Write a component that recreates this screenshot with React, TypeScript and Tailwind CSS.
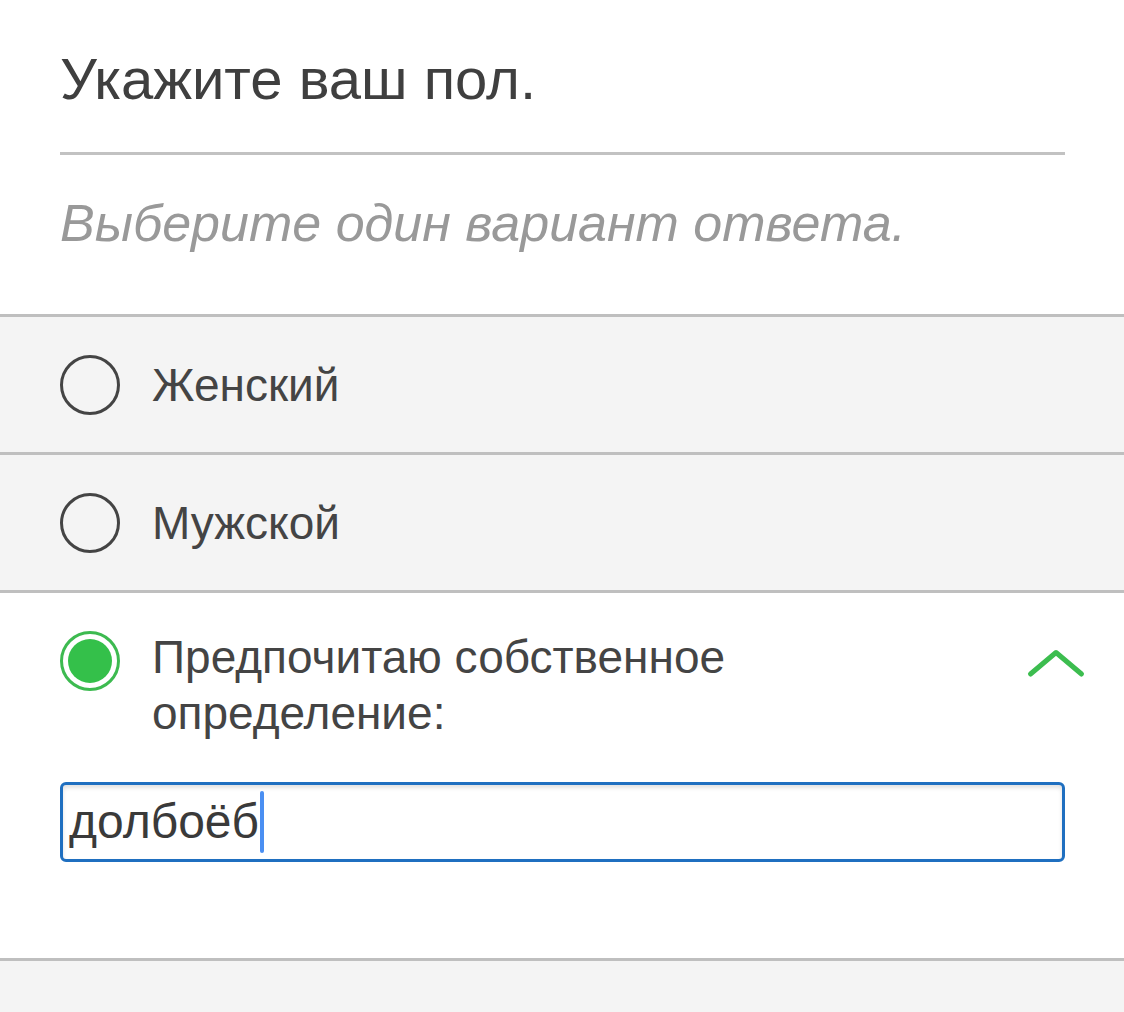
const options = [
  { label: 'Женский' },
  { label: 'Мужской' },
];

function Radio({ checked }: { checked?: boolean }) {
  if (checked) {
    return (
      <div className="w-[60px] h-[60px] shrink-0 rounded-full border-[3px] border-[#3dba50] flex items-center justify-center bg-white">
        <div className="w-[44px] h-[44px] rounded-full bg-[#34c04a]" />
      </div>
    );
  }
  return <div className="w-[60px] h-[60px] shrink-0 rounded-full border-[3px] border-[#444]" />;
}

export default function App() {
  return (
    <div className="w-[1124px] h-[1012px] overflow-hidden bg-white font-['Liberation_Sans',Arial,sans-serif] text-[#444]">
      <div className="pt-[43px] px-[60px]">
        <h1 className="text-[58px] leading-[72px] text-[#3f3f3f]">Укажите ваш пол.</h1>
      </div>
      <div className="ml-[60px] w-[1005px] h-[3px] bg-[#c2c2c2] mt-[37px]" />
      <p className="px-[60px] mt-[34px] pb-[57px] text-[52px] leading-[68px] italic text-[#999]">
        Выберите один вариант ответа.
      </p>

      <div className="border-t-[3px] border-[#bfbfbf]">
        {options.map((item) => (
          <div
            key={item.label}
            className="h-[138px] bg-[#f4f4f4] border-b-[3px] border-[#bfbfbf] flex items-center pl-[60px] gap-[32px]"
          >
            <Radio />
            <span className="text-[46px] leading-[56px]">{item.label}</span>
          </div>
        ))}

        <div className="bg-white border-b-[3px] border-[#bfbfbf] pt-[36px] pb-[96px] px-[60px]">
          <div className="flex items-start">
            <div className="mt-[2px]">
              <Radio checked />
            </div>
            <div className="flex-1 ml-[32px] text-[46px] leading-[56px]">
              Предпочитаю собственное
              <br />
              определение:
            </div>
            <svg width="60" height="32" viewBox="0 0 60 32" className="mt-[20px] -mr-[22px]">
              <polyline
                points="4.5,25 30,3.5 55.5,25"
                fill="none"
                stroke="#3cbd4f"
                strokeWidth="5"
                strokeLinecap="round"
                strokeLinejoin="round"
              />
            </svg>
          </div>
          <div className="mt-[41px] h-[80px] w-[1005px] rounded-[6px] border-[3px] border-[#1f6fc0] shadow-[inset_0_3px_4px_rgba(0,0,0,0.12)] flex items-center pl-[6px]">
            <span className="text-[48px] leading-[56px] text-[#3a3a3a]">долбоёб</span>
            <span className="ml-[1px] w-[4px] h-[62px] rounded-full bg-[#4a8ff2]" />
          </div>
        </div>
        <div className="h-[60px] bg-[#f4f4f4]" />
      </div>
    </div>
  );
}
